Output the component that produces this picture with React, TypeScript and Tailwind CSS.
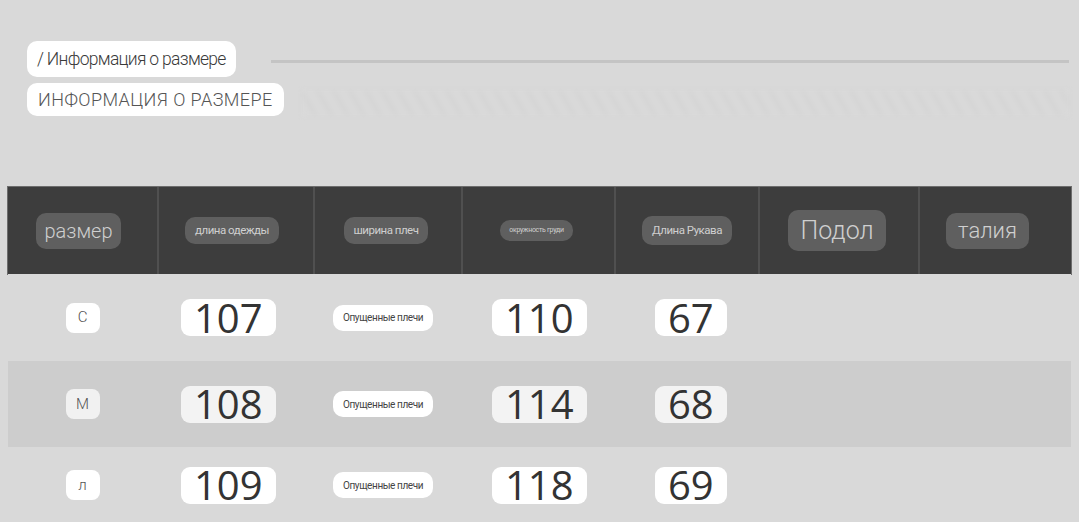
const cols = "grid grid-cols-[151px_156px_148px_153px_144px_160px_151px]";

const rows = [
  { size: "С", len: "107", chest: "110", sleeve: "67", bg: "bg-[#d9d9d9]", h: "h-[87px]", sizeBg: "bg-white", numBg: "bg-white" },
  { size: "М", len: "108", chest: "114", sleeve: "68", bg: "bg-[#cdcdcd]", h: "h-[86px]", sizeBg: "bg-[#f1f1f1]", numBg: "bg-[#f3f3f3]" },
  { size: "л", len: "109", chest: "118", sleeve: "69", bg: "bg-[#d9d9d9]", h: "h-[76px]", sizeBg: "bg-white", numBg: "bg-white" },
];

function HeadPill({ children, className, cell = "" }: { children: React.ReactNode; className: string; cell?: string }) {
  return (
    <div className={"flex items-center justify-center border-r-2 border-[#505050] last:border-r-0 " + cell}>
      <span className={"rounded-[10px] bg-[#5f5f5f] text-[#cfcfcf] leading-none whitespace-nowrap " + className}>{children}</span>
    </div>
  );
}

function Num({ value, bg }: { value: string; bg: string }) {
  return (
    <span className={"rounded-[9px] px-[13px] h-[37px] flex items-center text-[40px] leading-none text-[#333] font-['Open_Sans'] " + bg}>
      {value}
    </span>
  );
}

export default function App() {
  return (
    <div className="w-[1079px] h-[522px] overflow-hidden bg-[#d9d9d9] font-['Roboto',sans-serif]">
      <div className="pt-[41px] pl-[27px]">
        <div className="flex items-center">
          <span className="h-[36px] shrink-0 whitespace-nowrap flex items-center rounded-[10px] bg-white px-[10px] text-[17.5px] tracking-[-0.7px] font-light text-[#3a3a3a]">
            / Информация о размере
          </span>
          <div className="ml-[35px] mr-[10px] flex-1 h-[3px] bg-[#c4c4c4] mt-[4px]" />
        </div>
        <div className="mt-[5px] flex items-center">
          <span className="h-[33px] shrink-0 whitespace-nowrap flex items-center rounded-[10px] bg-white px-[11px] text-[18px] tracking-[0.45px] font-light text-[#555]">
            ИНФОРМАЦИЯ О РАЗМЕРЕ
          </span>
          <div className="ml-[18px] mr-[10px] mt-[8px] flex-1 h-[26px] bg-[repeating-linear-gradient(60deg,#d9d9d9_0px,#d9d9d9_10px,#d5d5d5_10px,#d5d5d5_14px)] blur-[2px]" />
        </div>
      </div>

      <div className="mt-[71px] ml-[8px] w-[1063px]">
        <div className={cols + " h-[87px] bg-[#3d3d3d] ring-1 ring-[#6d6d6d]"}>
          <HeadPill className="px-[8px] py-[8px] text-[20px] font-light" cell="pr-[8px]">размер</HeadPill>
          <HeadPill className="px-[10px] py-[8px] text-[11.5px] tracking-[-0.5px]" cell="pr-[8px]">длина одежды</HeadPill>
          <HeadPill className="px-[10px] py-[8px] text-[11.5px] tracking-[-0.5px]" cell="pr-[4px]">ширина плеч</HeadPill>
          <HeadPill className="px-[9px] py-[7px] text-[7px] tracking-[-0.3px]" cell="pr-[4px]">окружность груди</HeadPill>
          <HeadPill className="px-[10px] py-[9px] text-[11.5px] tracking-[-0.5px]">Длина Рукава</HeadPill>
          <HeadPill className="px-[12px] py-[8px] text-[25px] font-light" cell="pr-[4px]">Подол</HeadPill>
          <HeadPill className="px-[12px] py-[7px] text-[22px] font-light" cell="pr-[16px]">талия</HeadPill>
        </div>

        {rows.map((r) => (
          <div key={r.size} className={cols + " items-center " + r.h + " " + r.bg}>
            <div className="flex justify-center pr-[2px]">
              <span className={"w-[34px] h-[30px] flex items-center justify-center rounded-[8px] text-[15px] font-light text-[#555] " + r.sizeBg}>
                {r.size}
              </span>
            </div>
            <div className="flex pl-[22px]">
              <Num value={r.len} bg={r.numBg} />
            </div>
            <div className="flex pl-[18px]">
              <span className="h-[26px] px-[10px] flex items-center whitespace-nowrap rounded-[10px] bg-white text-[10px] tracking-[-0.4px] text-[#444]">
                Опущенные плечи
              </span>
            </div>
            <div className="flex pl-[29px]">
              <Num value={r.chest} bg={r.numBg} />
            </div>
            <div className="flex pl-[39px]">
              <Num value={r.sleeve} bg={r.numBg} />
            </div>
            <div />
            <div />
          </div>
        ))}
      </div>
    </div>
  );
}
